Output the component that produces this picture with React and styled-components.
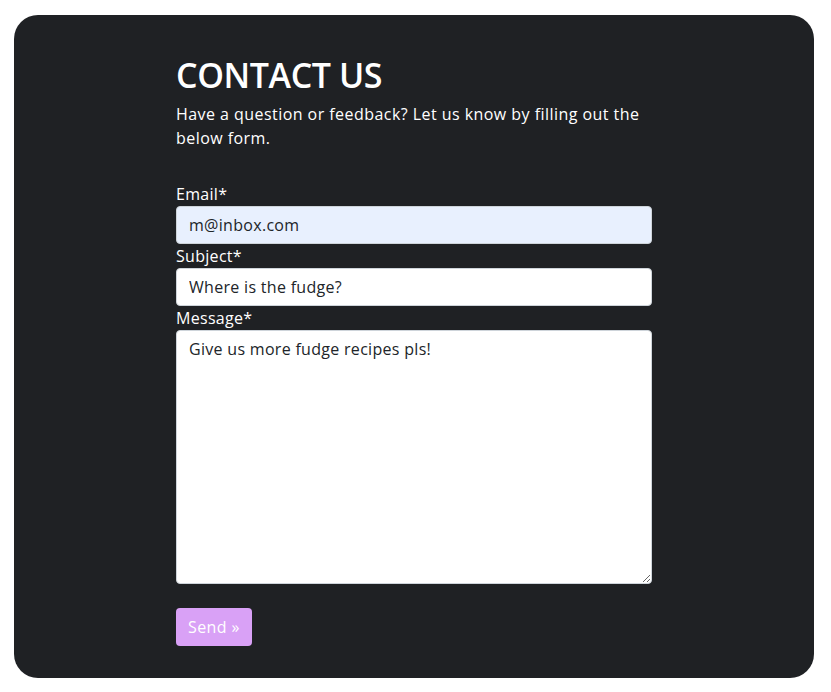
import React from 'react';
import styled, { createGlobalStyle } from 'styled-components';

const GlobalStyle = createGlobalStyle`
  * { box-sizing: border-box; }
  body {
    margin: 0;
    background: #ffffff;
    font-family: "Open Sans", "Liberation Sans", sans-serif;
  }
`;

const Page = styled.div`
  padding: 15px 17px 14px 14px;
`;

const Card = styled.section`
  background: #1f2124;
  border-radius: 24px;
  padding: 39px 0 32px;
  display: flex;
  justify-content: center;
`;

const Column = styled.div`
  width: 476px;
  display: flex;
  flex-direction: column;
`;

const Title = styled.h1`
  margin: 0 0 5px;
  color: #ffffff;
  font-family: "Open Sans", sans-serif;
  font-weight: 600;
  font-size: 34px;
  line-height: 43px;
  letter-spacing: -0.4px;
`;

const Intro = styled.p`
  margin: 0 0 32px;
  color: #ffffff;
  font-size: 16px;
  line-height: 24px;
  letter-spacing: 0.45px;
`;

const Form = styled.form`
  display: flex;
  flex-direction: column;
`;

const Label = styled.label`
  color: #ffffff;
  font-size: 16px;
  line-height: 24px;
  letter-spacing: 0.3px;
`;

const Field = styled.input`
  display: block;
  width: 100%;
  height: 38px;
  padding: 0 12px;
  border: 1px solid #ced4da;
  border-radius: 4px;
  background: ${p => (p.$filled ? '#e8f0fe' : '#ffffff')};
  color: #212529;
  font-family: inherit;
  font-size: 16px;
  letter-spacing: 0.3px;
  outline: none;
`;

const Area = styled.textarea`
  display: block;
  width: 100%;
  height: 254px;
  padding: 6px 12px;
  border: 1px solid #ced4da;
  border-radius: 4px;
  background: #ffffff;
  color: #212529;
  font-family: inherit;
  font-size: 16px;
  line-height: 24px;
  letter-spacing: 0.3px;
  resize: vertical;
  outline: none;
`;

const Send = styled.button`
  align-self: flex-start;
  margin-top: 24px;
  height: 38px;
  padding: 0 12px;
  border: none;
  border-radius: 4px;
  background: #d9a1f6;
  color: #ffffff;
  font-family: inherit;
  font-size: 16px;
  letter-spacing: 0.4px;
  cursor: pointer;
`;

const App = () => {
  return (
    <>
      <GlobalStyle />
      <Page>
        <Card>
          <Column>
            <Title>CONTACT US</Title>
            <Intro>
              Have a question or feedback? Let us know by filling out the<br />
              below form.
            </Intro>
            <Form onSubmit={e => e.preventDefault()}>
              <Label htmlFor="email">Email*</Label>
              <Field id="email" $filled defaultValue="m@inbox.com" />
              <Label htmlFor="subject">Subject*</Label>
              <Field id="subject" defaultValue="Where is the fudge?" />
              <Label htmlFor="message">Message*</Label>
              <Area id="message" defaultValue="Give us more fudge recipes pls!" />
              <Send type="submit">Send »</Send>
            </Form>
          </Column>
        </Card>
      </Page>
    </>
  );
};

export default App;
